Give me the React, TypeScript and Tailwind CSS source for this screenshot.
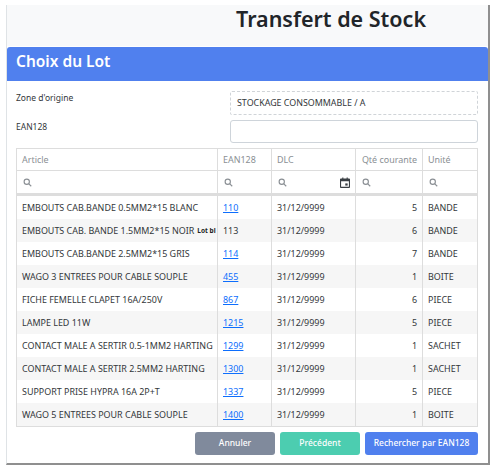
import React from "react";

const rows = [
  ["EMBOUTS CAB.BANDE 0.5MM2*15 BLANC", "110", "5", "BANDE", true],
  ["EMBOUTS CAB. BANDE 1.5MM2*15 NOIR", "113", "6", "BANDE", false],
  ["EMBOUTS CAB.BANDE 2.5MM2*15 GRIS", "114", "7", "BANDE", true],
  ["WAGO 3 ENTREES POUR CABLE SOUPLE", "455", "1", "BOITE", true],
  ["FICHE FEMELLE CLAPET 16A/250V", "867", "6", "PIECE", true],
  ["LAMPE LED 11W", "1215", "5", "PIECE", true],
  ["CONTACT MALE A SERTIR 0.5-1MM2 HARTING", "1299", "1", "SACHET", true],
  ["CONTACT MALE A SERTIR 2.5MM2 HARTING", "1300", "1", "SACHET", true],
  ["SUPPORT PRISE HYPRA 16A 2P+T", "1337", "5", "PIECE", true],
  ["WAGO 5 ENTREES POUR CABLE SOUPLE", "1400", "1", "BOITE", true],
] as const;

const cols = "grid grid-cols-[201px_54px_84px_67px_1fr]";

function Search() {
  return (
    <svg width="9" height="9" viewBox="0 0 24 24" fill="none" stroke="#8a8f94" strokeWidth="3" className="shrink-0">
      <circle cx="10" cy="10" r="7" />
      <path d="M15.5 15.5 22 22" />
    </svg>
  );
}

function FilterCell({ last, calendar }: { last?: boolean; calendar?: boolean }) {
  return (
    <div className={`flex items-center justify-between pl-[6px] pr-[5px] ${last ? "" : "border-r border-[#dddddd]"}`}>
      <Search />
      {calendar && (
        <svg width="10" height="11" viewBox="0 0 11 12" className="shrink-0">
          <path fill="#3a3f44" d="M1 1.5h1.5V.5h1.2v1h3.6v-1h1.2v1H10a1 1 0 0 1 1 1V11a1 1 0 0 1-1 1H1a1 1 0 0 1-1-1V2.500a1 1 0 0 1 1-1Zm.2 3V10.800h8.600V4.500Z" />
          <rect x="5.800" y="7" width="2.600" height="2.400" fill="#3a3f44" />
        </svg>
      )}
    </div>
  );
}

export default function App() {
  return (
    <div className="w-[490px] h-[465px] bg-white overflow-hidden pt-[5px] pl-[6px] font-['Noto_Sans','Open_Sans',sans-serif] text-[#33373a] antialiased">
      <div className="w-[484px] h-[460px] border-r-[2px] border-b-[2px] border-[#8f8f8f] border-l border-l-[#dfe3e6]">
        <div className="h-[41px] bg-[#f8f9fa] pl-[229px] pb-[13px] flex items-center text-[#212529] text-[21.500px] font-semibold leading-none">
          Transfert de Stock
        </div>
        <div className="h-[34px] mt-[1px] bg-[#5080ee] pl-[9px] pb-[5px] flex items-center text-white text-[15.500px] font-semibold rounded-t-[3px]">
          Choix du Lot
        </div>
        <div className="pl-[9px] pr-[10px]">
          <div className="h-[34px] pt-[10px] flex">
            <div className="w-[214px] text-[8.500px] leading-[14px]">Zone d'origine</div>
            <div className="flex-1 h-[24px] border border-dashed border-[#d0d4d8] rounded-[2px] flex items-center pl-[6px] text-[8.900px]">
              STOCKAGE CONSOMMABLE / A
            </div>
          </div>
          <div className="h-[33px] pt-[5px] flex">
            <div className="w-[214px] text-[8.500px] leading-[14px]">EAN128</div>
            <div className="flex-1 h-[23px] border border-[#ced4da] rounded-[3px]" />
          </div>
          <div className="border border-[#dddddd] text-[8.950px]">
            <div className={`${cols} h-[22px] border-b border-[#dddddd] text-[#8a8f94] items-stretch`}>
              <div className="pl-[5px] flex items-center border-r border-[#dddddd]">Article</div>
              <div className="pl-[5px] flex items-center border-r border-[#dddddd]">EAN128</div>
              <div className="pl-[5px] flex items-center border-r border-[#dddddd]">DLC</div>
              <div className="pr-[5px] flex items-center justify-end border-r border-[#dddddd]">Qté courante</div>
              <div className="pl-[5px] flex items-center">Unité</div>
            </div>
            <div className={`${cols} h-[25px] border-b-[3px] border-[#dddddd]`}>
              <FilterCell />
              <FilterCell />
              <FilterCell calendar />
              <FilterCell />
              <FilterCell last />
            </div>
            {rows.map((r, i) => (
              <div key={r[1]} className={`${cols} h-[23px] ${i % 2 === 1 ? "bg-[#f6f6f6]" : "bg-white"}`}>
                <div className="pl-[5px] flex items-center border-r border-[#dddddd] whitespace-nowrap overflow-hidden">
                  <span>{r[0]}</span>
                  {i === 1 && <span className="ml-[3px] text-[6.500px] font-bold text-[#222222]">Lot bl</span>}
                </div>
                <div className="pl-[5px] flex items-center border-r border-[#dddddd]">
                  {r[4] ? <a href="#" className="text-[#0d6efd] underline">{r[1]}</a> : r[1]}
                </div>
                <div className="pl-[5px] flex items-center border-r border-[#dddddd]">31/12/9999</div>
                <div className="pr-[5px] flex items-center justify-end border-r border-[#dddddd]">{r[2]}</div>
                <div className="pl-[5px] flex items-center">{r[3]}</div>
              </div>
            ))}
          </div>
          <div className="flex justify-end gap-[5px] mt-[5px] text-white text-[8.500px] font-medium">
            <button className="w-[80px] h-[23px] rounded-[3px] bg-[#808a9c]">Annuler</button>
            <button className="w-[80px] h-[23px] rounded-[3px] bg-[#4ccdb0]">Précédent</button>
            <button className="w-[113px] h-[23px] rounded-[3px] bg-[#5080ee]">Rechercher par EAN128</button>
          </div>
        </div>
      </div>
    </div>
  );
}
